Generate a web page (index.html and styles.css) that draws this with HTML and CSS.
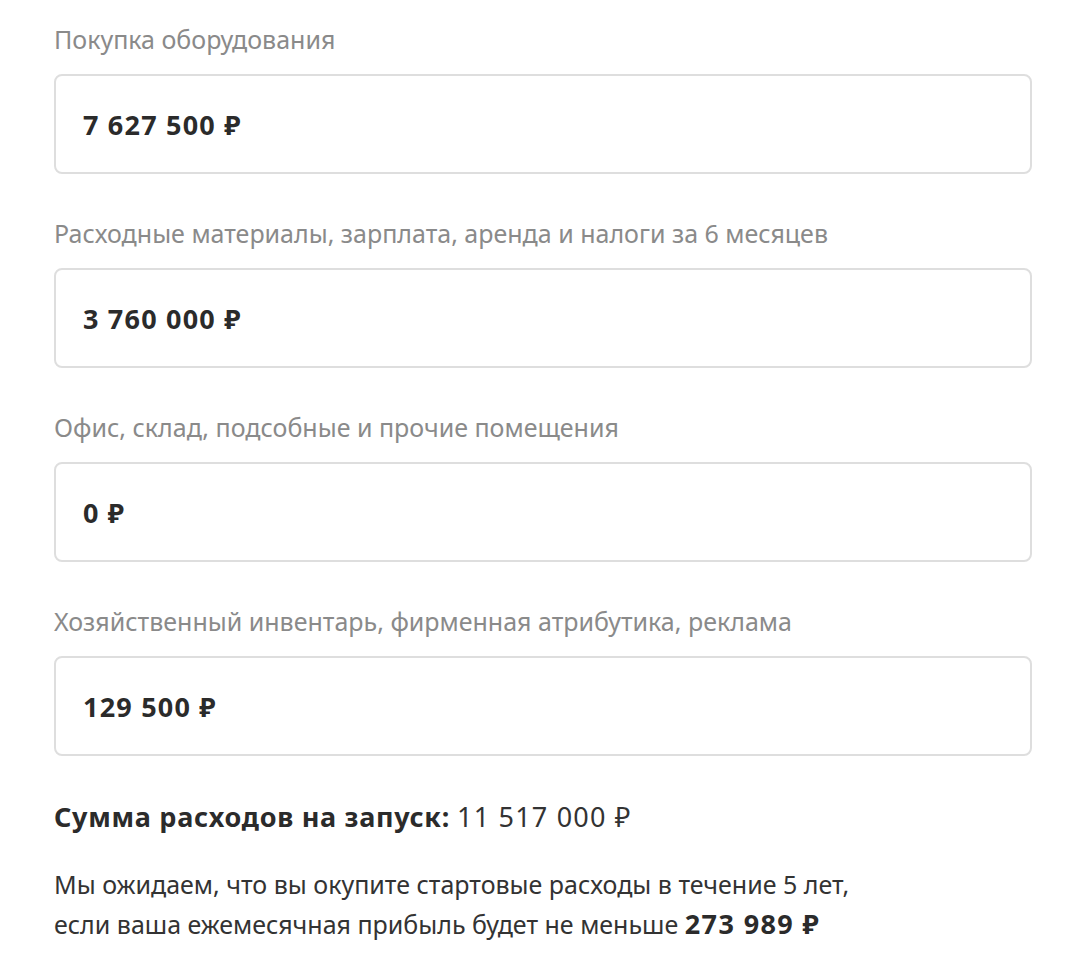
FILE: index.html
```html
<!DOCTYPE html>
<html lang="ru">
<head>
    <meta charset="UTF-8">
    <meta name="viewport" content="width=device-width, initial-scale=1.0">
    <title>Расходы на запуск</title>
    <link rel="stylesheet" href="styles.css">
</head>
<body>
    <div class="calc">
        <div class="field">
            <div class="field-label">Покупка оборудования</div>
            <div class="field-box">7 627 500 ₽</div>
        </div>

        <div class="field">
            <div class="field-label">Расходные материалы, зарплата, аренда и налоги за 6 месяцев</div>
            <div class="field-box">3 760 000 ₽</div>
        </div>

        <div class="field">
            <div class="field-label">Офис, склад, подсобные и прочие помещения</div>
            <div class="field-box">0 ₽</div>
        </div>

        <div class="field">
            <div class="field-label">Хозяйственный инвентарь, фирменная атрибутика, реклама</div>
            <div class="field-box">129 500 ₽</div>
        </div>

        <div class="total">
            <b>Сумма расходов на запуск:</b> <span class="num">11 517 000 ₽</span>
        </div>

        <p class="note">
            Мы ожидаем, что вы окупите стартовые расходы в течение 5 лет,<br>
            если ваша ежемесячная прибыль будет не меньше <b class="num">273 989 ₽</b>
        </p>
    </div>
</body>
</html>
```

FILE: styles.css
```css
* {
    box-sizing: border-box;
}

body {
    margin: 0;
    background-color: #ffffff;
    color: #333333;
    font-family: 'Noto Sans', 'Open Sans', sans-serif;
}

.calc {
    width: 978px;
    margin-left: 54px;
    padding-top: 23px;
}

.field {
    margin-bottom: 43px;
}

.field-label {
    font-size: 25px;
    line-height: 32px;
    color: #8a8a8a;
    margin-bottom: 19px;
}

.field-box {
    height: 100px;
    display: flex;
    align-items: center;
    padding-left: 27px;
    border: 2px solid #dedede;
    border-radius: 8px;
    font-size: 27px;
    font-weight: bold;
    letter-spacing: 1.2px;
    color: #2b2b2b;
}

.total {
    margin-top: 4px;
    font-size: 27px;
    line-height: 36px;
    color: #333333;
}

.total b {
    color: #2b2b2b;
    letter-spacing: 0.7px;
}

.num {
    letter-spacing: 1.2px;
}

.note {
    margin: 29px 0 0;
    font-size: 25px;
    line-height: 40px;
    color: #333333;
}

.note b {
    font-size: 27px;
    color: #2b2b2b;
    letter-spacing: 1.4px;
}
```
